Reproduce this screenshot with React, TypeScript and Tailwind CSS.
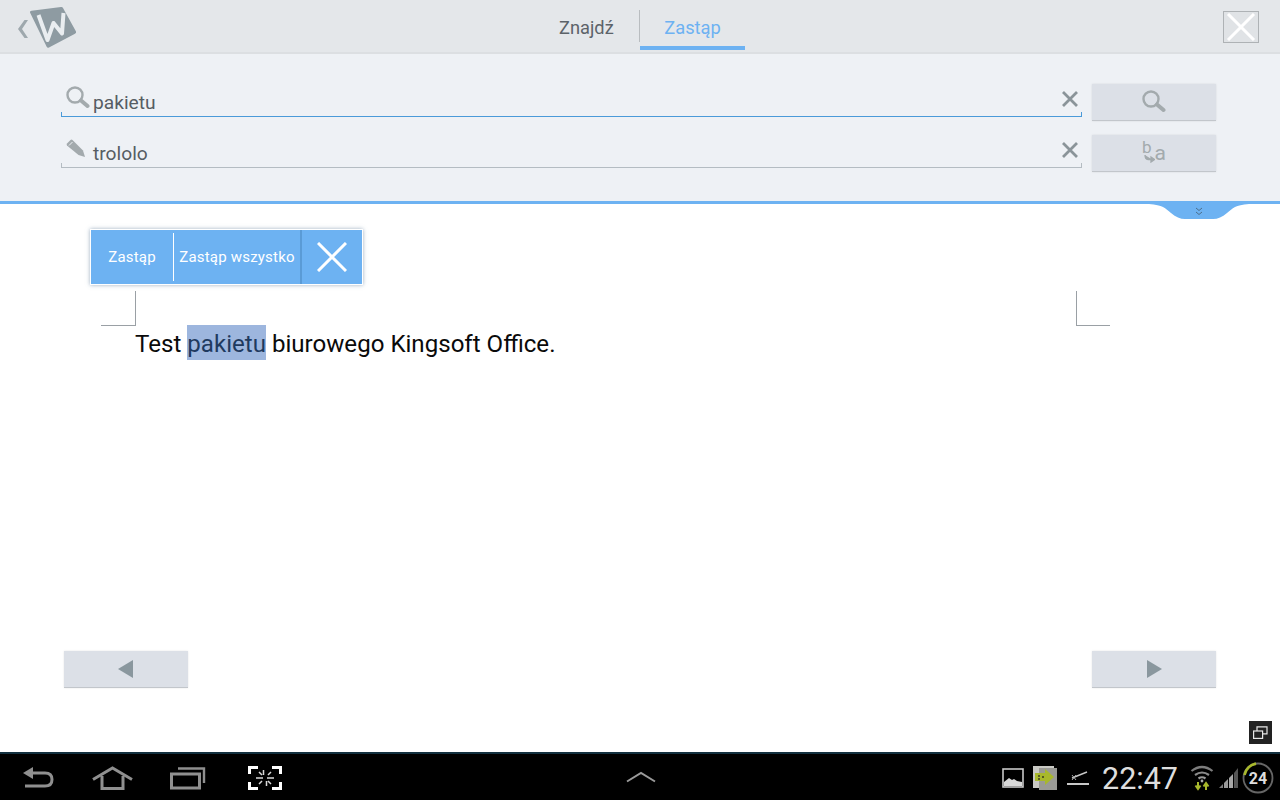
import React from 'react';

const Magnifier = ({ size = 24, color = '#a3aaad' }: { size?: number; color?: string }) => (
  <svg width={size} height={size} viewBox="0 0 24 24" fill="none">
    <circle cx="9" cy="9" r="7.500" stroke={color} strokeWidth="2.400" />
    <path d="M15 14.500l6.500 5.500" stroke={color} strokeWidth="4" strokeLinecap="round" />
  </svg>
);

const ClearX = () => (
  <svg width="18" height="16" viewBox="0 0 18 16" fill="none">
    <path d="M2 1l14 14M16 1L2 15" stroke="#8a9499" strokeWidth="2.800" />
  </svg>
);

const Pencil = () => (
  <svg width="20" height="20" viewBox="0 0 20 20">
    <path d="M1 4.500L4.500 1q1-.8 2 0L17 11.500l2 6.500-6.500-2L1 6.500q-.8-1 0-2z" fill="#a3aaad" />
    <path d="M3 6.500L6.500 3" stroke="#eef1f5" strokeWidth="1" />
  </svg>
);

const SearchRow = ({
  icon,
  value,
  active,
  button
}: {
  icon: React.ReactNode;
  value: string;
  active?: boolean;
  button: React.ReactNode;
}) => (
  <div className="flex items-start">
    <div className={`relative flex h-[33px] w-[1021px] items-center border-b ${active ? 'border-[#4a9ad9]' : 'border-[#b4bcc2]'}`}>
      <span className={`absolute bottom-0 left-0 h-[4px] w-px ${active ? 'bg-[#4a9ad9]' : 'bg-[#b4bcc2]'}`} />
      <span className={`absolute bottom-0 right-0 h-[4px] w-px ${active ? 'bg-[#4a9ad9]' : 'bg-[#b4bcc2]'}`} />
      <span className="ml-[5px] flex h-[24px] w-[24px] -translate-y-[2px] items-center">{icon}</span>
      <span className="ml-[3px] mt-[6px] text-[19.200px] leading-[24px] text-[#565d63]">{value}</span>
      <span className="ml-auto mr-[3px] -translate-y-[1px]"><ClearX /></span>
    </div>
    <button className="ml-[10px] flex h-[37px] w-[124px] items-center justify-center border-b border-[#c2c6cb] bg-[#dce0e7] shadow-[0_0_2px_rgba(0,0,0,0.1)]">
      {button}
    </button>
  </div>
);

const NavButton = ({ dir }: { dir: 'left' | 'right' }) => (
  <button className="flex h-[37px] w-[124px] items-center justify-center border-b border-[#c2c6cb] bg-[#dce0e7] shadow-[0_0_2px_rgba(0,0,0,0.1)]">
    <svg width="16" height="18" viewBox="0 0 16 18">
      <path d={dir === 'left' ? 'M15 0v18L0 9z' : 'M1 0v18L16 9z'} fill="#8a979e" />
    </svg>
  </button>
);

// page coordinates, so the shape stays readable against the screenshot
const Logo = () => (
  <svg width="64" height="44" viewBox="15 6 64 44" className="overflow-visible">
    <path d="M24.500 20L18 29l6.500 9H28l-6-9 6-9z" fill="#9ea8ad" />
    <path d="M30 12.500q-.3-1.500 1.500-1.800L61 7q1.500-.2 2 1L76 31.500q.5 1.500-1 2.300L49 47.500q-1.500.7-2.200-.5z" fill="#8e9ba2" />
    <path d="M38.500 15l9 25 6-17 8.500 10.500L63.500 13" fill="none" stroke="#e9edf0" strokeWidth="4" strokeLinejoin="round" />
  </svg>
);

const BackIcon = () => (
  <svg width="32" height="24" viewBox="0 0 32 24" fill="none">
    <path d="M9 7h14q7 0 7 6.500T23 20H3" stroke="#8f8f8f" strokeWidth="3" />
    <path d="M11 1v12L1 7z" fill="#8f8f8f" />
  </svg>
);

const HomeIcon = () => (
  <svg width="42" height="26" viewBox="0 0 42 26" fill="none">
    <path d="M1 14.500L20.500 3 40 14.500" stroke="#8f8f8f" strokeWidth="3" />
    <path d="M10 11v12.500h21V11" stroke="#8f8f8f" strokeWidth="3" />
  </svg>
);

const RecentIcon = () => (
  <svg width="36" height="26" viewBox="0 0 36 26" fill="none">
    <rect x="1.500" y="9" width="28" height="14" stroke="#8f8f8f" strokeWidth="3" />
    <path d="M8 3.500h26V18" stroke="#8f8f8f" strokeWidth="2.400" />
  </svg>
);

const ScreenshotIcon = () => (
  <svg width="34" height="24" viewBox="0 0 34 24" fill="none" stroke="#fff">
    <path d="M10 1.500H1.500V8M24 1.500h8.500V8M10 22.500H1.500V16M24 22.500h8.500V16" strokeWidth="3" />
    <path d="M15.500 4v5M18.500 15v5M8 12h7M19 12h7M11 6l3 3M23 6l-3 3M11 18l3-3M23 18l-3-3" strokeWidth="1.500" opacity=".85" />
  </svg>
);

const StatusIcons = () => (
  <div className="flex items-center">
    <svg width="22" height="20" viewBox="0 0 22 20">
      <rect x="1" y="1" width="20" height="18" fill="#000" stroke="#c8c8c8" strokeWidth="1.600" />
      <path d="M2 18v-4l5-4 3 2 2-1 3 2 5 1v4z" fill="#d8d8d8" />
    </svg>
    <svg className="ml-[9px]" width="26" height="24" viewBox="0 0 26 24">
      <rect x="0" y="0" width="21" height="22" fill="#c9c9c4" />
      <rect x="6" y="2" width="18" height="22" fill="#9a9a95" />
      <path d="M2 7h10V3l9 8-9 8v-4H2z" fill="#a8b82c" />
      <circle cx="6" cy="10" r="1" fill="#3a3a20" />
      <circle cx="10" cy="11" r="1" fill="#3a3a20" />
      <circle cx="6" cy="13" r="1" fill="#3a3a20" />
    </svg>
    <svg className="ml-[7px]" width="24" height="18" viewBox="0 0 24 18" fill="none">
      <path d="M6 9l15-6" stroke="#c8c8c8" strokeWidth="1.500" />
      <path d="M1 15h22" stroke="#c8c8c8" strokeWidth="2" />
      <path d="M6 6l4 5M10 6l-4 5" stroke="#aaa" strokeWidth="1" />
    </svg>
    <span className="ml-[12px] mt-[1px] w-[77px] text-[30.500px] leading-[36px] text-[#dedede]">22:47</span>
    <svg className="ml-[11px]" width="24" height="26" viewBox="0 0 24 26" fill="none">
      <path d="M1.500 6q10.500-8 21 0" stroke="#7d7d7d" strokeWidth="2.200" />
      <path d="M5 10q7-5 14 0" stroke="#8a8a8a" strokeWidth="2.200" />
      <path d="M8.500 13.500q3.500-2.500 7 0" stroke="#9a9a9a" strokeWidth="2.200" />
      <circle cx="12" cy="16" r="1.400" fill="#aaa" />
      <path d="M8 17v6M5.500 20.500L8 24l2.500-3.500" stroke="#a8b82c" strokeWidth="2" />
      <path d="M16 25v-6M13.500 21.500L16 18l2.500 3.500" stroke="#a8b82c" strokeWidth="2" />
    </svg>
    <svg className="ml-[5px]" width="20" height="22" viewBox="0 0 20 22">
      <path d="M0 21l4-4v4z" fill="#7d7d7d" />
      <path d="M5 16l4-4v9H5z" fill="#9a9a9a" />
      <path d="M10 11l4-4v14h-4z" fill="#a8a8a8" />
      <path d="M15 6l4-5v20h-4z" fill="#555" />
    </svg>
    <svg className="ml-[3px]" width="32" height="32" viewBox="0 0 32 32">
      <circle cx="16" cy="16" r="14.500" fill="none" stroke="#666" strokeWidth="1.800" />
      <path d="M2.500 13A14.500 14.500 0 0 1 14 1.600" fill="none" stroke="#a8b82c" strokeWidth="2.600" />
      <text x="16" y="21.500" textAnchor="middle" fontSize="16" fontWeight="700" fill="#dedede" fontFamily="Roboto, sans-serif">24</text>
    </svg>
  </div>
);

const App: React.FC = () => {
  return (
    <div className="flex h-[800px] w-[1280px] flex-col overflow-hidden bg-white font-['Roboto',sans-serif]">
      {/* title bar */}
      <header className="flex h-[54px] shrink-0 border-b-2 border-[#dcdfe2] bg-[#e4e7ea]">
        <div className="w-[559px] pl-[15px] pt-[6px]"><Logo /></div>
        <div className="flex h-[52px] items-start">
          <div className="w-[80px] pt-[17px] text-[18.300px] leading-[22px] text-[#5c6369]">Znajdź</div>
          <div className="mt-[10px] h-[32px] w-px bg-[#b9bdc0]" />
          <div className="h-[50px] w-[105px] border-b-[4px] border-[#6db2f2] pt-[17px] text-center text-[18.300px] leading-[22px] text-[#6db2f2]">Zastąp</div>
        </div>
        <div className="ml-auto mr-[21px] mt-[11px] flex h-[32px] w-[36px] items-center justify-center border border-[#aeb2b5] bg-[#e0e3e6]">
          <svg width="30" height="28" viewBox="0 0 30 28" fill="none">
            <path d="M2 1l26 26M28 1L2 27" stroke="#fff" strokeWidth="3" />
          </svg>
        </div>
      </header>

      {/* search panel */}
      <section className="flex h-[150px] shrink-0 flex-col gap-[14px] border-b-[3px] border-[#6db2f2] bg-[#eef1f5] pl-[61px] pt-[30px]">
        <SearchRow icon={<Magnifier />} value="pakietu" active button={<Magnifier />} />
        <SearchRow
          icon={<Pencil />}
          value="trololo"
          button={
            <span className="relative flex h-[20px] w-[24px] items-end justify-between text-[#a3aaad]">
              <span className="-mt-[3px] self-start text-[17px] leading-[15px]">b</span>
              <svg className="absolute bottom-[0px] left-[2px]" width="11" height="8" viewBox="0 0 11 8" fill="none">
                <path d="M1 0q0 4.500 3 4.500h4M7 2l3.500 2.500L7 7z" stroke="#a3aaad" strokeWidth="1.300" fill="#a3aaad" />
              </svg>
              <span className="text-[21px] leading-[20px]">a</span>
            </span>
          }
        />
      </section>

      {/* document */}
      <main className="relative flex min-h-0 flex-1 flex-col">
        <svg className="absolute right-[31px] top-0" width="100" height="16" viewBox="0 0 100 16">
          <path d="M0 0h100c-14 1-16 4-22 9-5 4-9 6-14 6H36c-5 0-9-2-14-6C16 4 14 1 0 0z" fill="#6db2f2" />
          <path d="M47 4l3 2.500L53 4M47 8l3 2.500L53 8" fill="none" stroke="#4d6f8c" strokeWidth="1" />
        </svg>

        <div className="ml-[90px] mt-[25px] flex h-[56px] w-[273px] border border-white bg-[#6db2f2] text-white shadow-[0_0_4px_rgba(90,120,150,0.6)]">
          <div className="flex w-[82px] items-center justify-center text-[15px] tracking-[0.2px]">Zastąp</div>
          <div className="my-[3px] w-px bg-white" />
          <div className="flex w-[126px] items-center justify-center text-[15px] tracking-[0.2px] whitespace-nowrap">Zastąp wszystko</div>
          <div className="w-[2px] bg-[#5a9bd6]" />
          <div className="flex flex-1 items-center justify-center">
            <svg width="30" height="30" viewBox="0 0 30 30" fill="none">
              <path d="M1 1l28 28M29 1L1 29" stroke="#fff" strokeWidth="3" />
            </svg>
          </div>
        </div>

        <div className="ml-[101px] mt-[6px] flex h-[34px] w-[1009px] justify-between">
          <div className="h-[35px] w-[35px] border-b border-r border-[#9aa0a5]" />
          <div className="h-[35px] w-[34px] border-b border-l border-[#9aa0a5]" />
        </div>

        <p className="h-[35px] pl-[135px] text-[24.100px] leading-[39px] text-[#0a0a0a]">
          Test <span className="inline-block h-[35px] bg-[#9db6de] text-[#1f3a5f]">pakietu</span> biurowego Kingsoft Office.
        </p>

        <div className="ml-[64px] mt-[291px] flex w-[1152px] justify-between">
          <NavButton dir="left" />
          <NavButton dir="right" />
        </div>

        <div className="absolute bottom-[8px] right-[8px] flex h-[23px] w-[23px] items-center justify-center bg-[#222]">
          <svg width="15" height="13" viewBox="0 0 15 13" fill="none" stroke="#e8e8e8" strokeWidth="1.200">
            <rect x=".6" y="5" width="9" height="7.400" />
            <path d="M4 5V.8h10v7h-4" />
          </svg>
        </div>
      </main>

      {/* system bar */}
      <footer className="relative flex h-[48px] shrink-0 items-center border-t-2 border-[#12303f] bg-black">
        <div className="ml-[22px] mt-[2px]"><BackIcon /></div>
        <div className="ml-[38px] mt-[1px]"><HomeIcon /></div>
        <div className="ml-[36px] mt-[1px]"><RecentIcon /></div>
        <div className="ml-[42px] mt-[2px]"><ScreenshotIcon /></div>
        <div className="-mt-[1px] ml-[344px]">
          <svg width="30" height="12" viewBox="0 0 30 12" fill="none">
            <path d="M1 10.500L15 2l14 8.500" stroke="#9a9a9a" strokeWidth="2" />
          </svg>
        </div>
        <div className="ml-auto mr-[6px] mt-[2px]"><StatusIcons /></div>
      </footer>
    </div>
  );
};

export default App;
